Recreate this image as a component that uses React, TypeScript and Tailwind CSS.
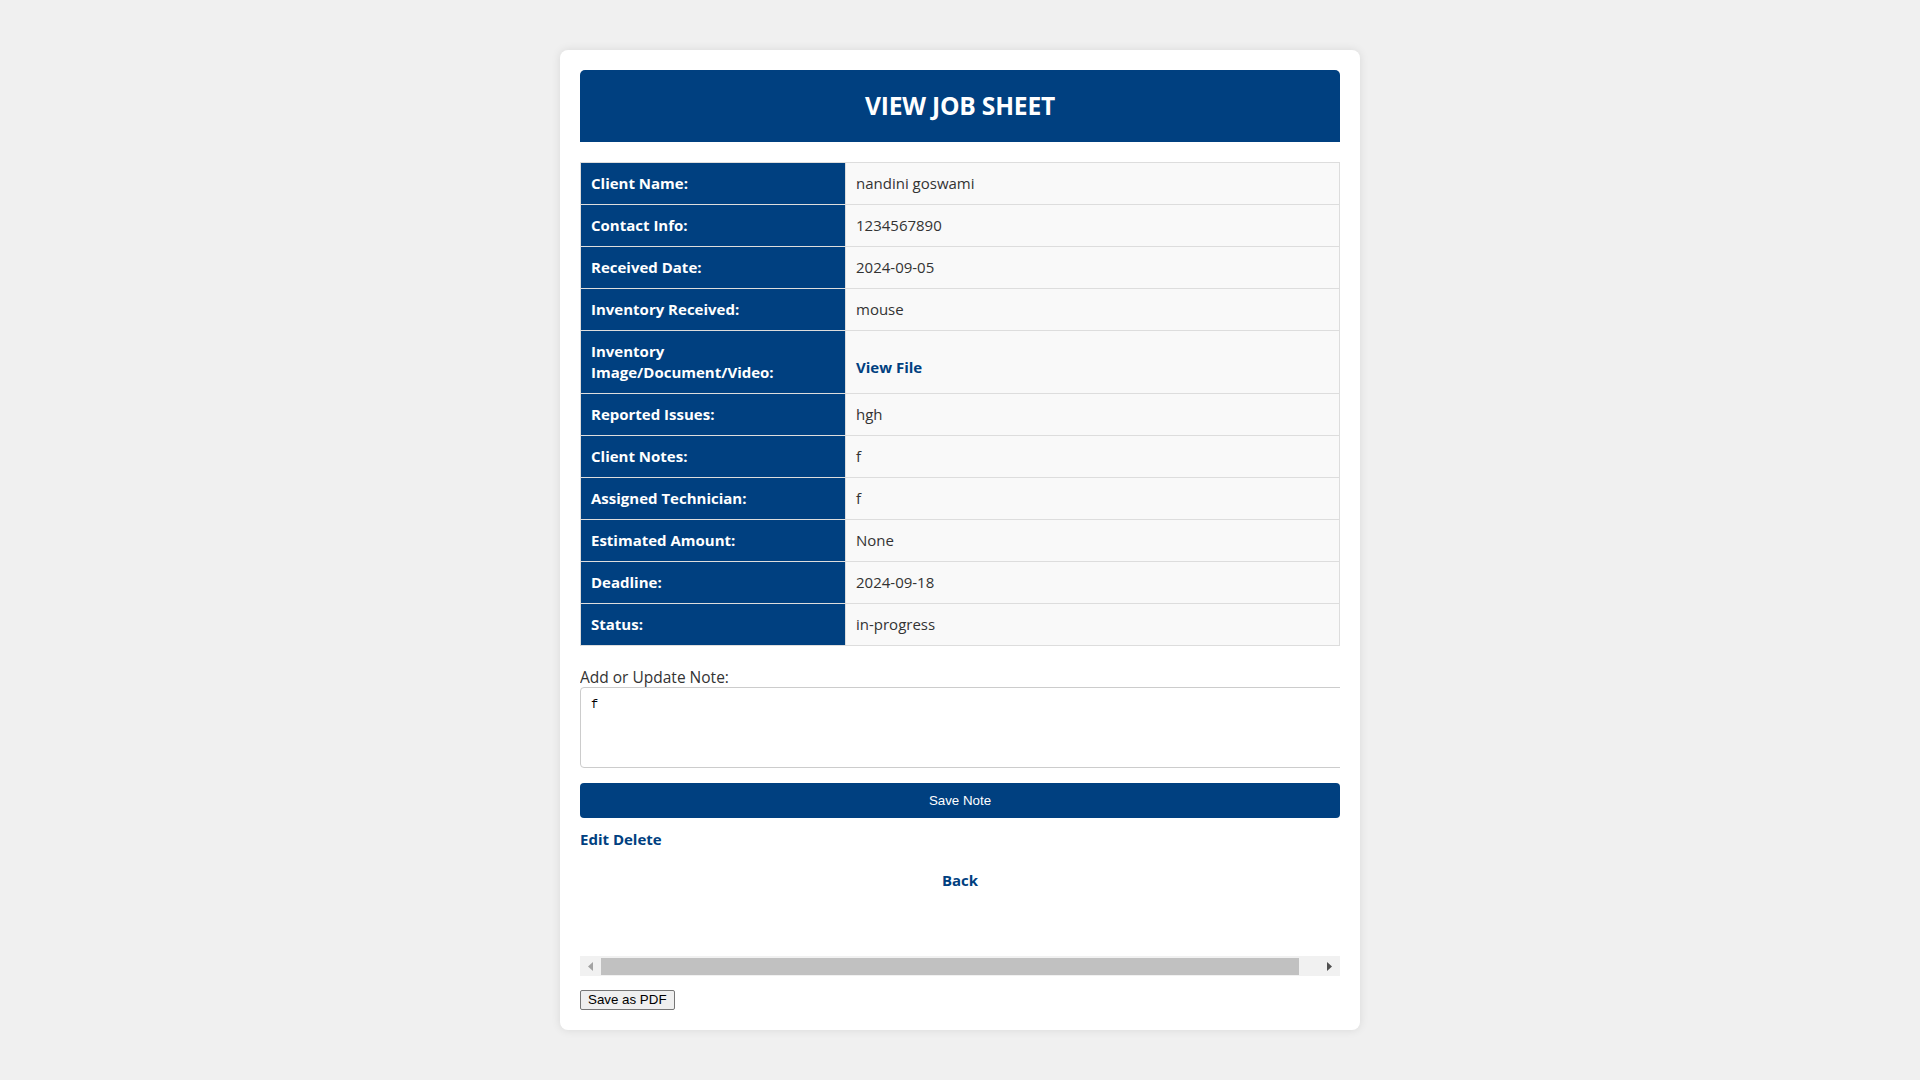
import React from "react";

interface Field {
  label: string;
  value: string;
  link?: boolean;
}

const fields: Field[] = [
  { label: "Client Name:", value: "nandini goswami" },
  { label: "Contact Info:", value: "1234567890" },
  { label: "Received Date:", value: "2024-09-05" },
  { label: "Inventory Received:", value: "mouse" },
  { label: "Inventory Image/Document/Video:", value: "View File", link: true },
  { label: "Reported Issues:", value: "hgh" },
  { label: "Client Notes:", value: "f" },
  { label: "Assigned Technician:", value: "f" },
  { label: "Estimated Amount:", value: "None" },
  { label: "Deadline:", value: "2024-09-18" },
  { label: "Status:", value: "in-progress" },
];

const App: React.FC = () => {
  return (
    <div className="min-h-screen bg-[#f0f0f0] pt-[50px] pb-[51px] font-['Open_Sans',sans-serif] text-[#333]">
      <div className="w-[800px] mx-auto bg-white rounded-[8px] shadow-[0_0_10px_rgba(0,0,0,0.1)] px-5 pt-5 pb-5">
        {/* scroll area */}
        <div className="overflow-hidden">
          <div className="h-[72px] bg-[#004080] rounded-t-[5px] flex items-center justify-center">
            <h1 className="text-white font-bold text-[24.6px] leading-none tracking-[-0.2px]">VIEW JOB SHEET</h1>
          </div>

          {/* details table */}
          <div className="mt-5 border border-[#ddd] divide-y divide-[#ddd]">
            {fields.map((f) => (
              <div key={f.label} className="flex text-[15px] leading-[21px]">
                <div className="w-[265px] shrink-0 bg-[#004080] text-white font-bold px-[10px] py-[10px] border-r border-[#ddd]">
                  {f.label === "Inventory Image/Document/Video:" ? (
                    <>
                      Inventory
                      <br />
                      Image/Document/Video:
                    </>
                  ) : (
                    f.label
                  )}
                </div>
                {f.link ? (
                  <div className="flex-1 bg-[#f9f9f9] px-[10px] pt-[20px] pb-[10px] flex items-center">
                    <span className="font-bold text-[#004080]">{f.value}</span>
                  </div>
                ) : (
                  <div className="flex-1 bg-[#f9f9f9] px-[10px] py-[10px] flex items-center">{f.value}</div>
                )}
              </div>
            ))}
          </div>

          {/* note form */}
          <div className="mt-[20px] text-[15.5px] leading-[21px] text-[#333] pt-[1px] -mb-[1px]">Add or Update Note:</div>
          <div className="w-[790px] h-[81px] border border-[#ccc] rounded-[4px] px-[10px] py-[10px] font-['Liberation_Mono',monospace] text-[12px] leading-[15px] text-black">
            f
          </div>
          <button className="mt-[15px] w-full h-[35px] bg-[#004080] text-white rounded-[4px] font-['Liberation_Sans',Arial,sans-serif] text-[13.33px]">
            Save Note
          </button>

          <div className="mt-[11px] text-[15px] leading-[21px] font-bold text-[#004080]">Edit Delete</div>
          <div className="mt-[20px] text-[15px] leading-[21px] font-bold text-[#004080] text-center">Back</div>
          <div className="h-[65px]" />
        </div>

        {/* horizontal scrollbar */}
        <div className="h-[20px] bg-[#f1f1f1] flex items-center">
          <div className="w-[21px] h-full flex items-center justify-center">
            <svg width="5" height="9" viewBox="0 0 5 9">
              <path d="M5 0 L0 4.5 L5 9 Z" fill="#a3a3a3" />
            </svg>
          </div>
          <div className="w-[698px] h-[17px] bg-[#c1c1c1]" />
          <div className="flex-1 h-full flex items-center justify-end pr-[8px]">
            <svg width="5" height="9" viewBox="0 0 5 9">
              <path d="M0 0 L5 4.5 L0 9 Z" fill="#505050" />
            </svg>
          </div>
        </div>

        <button className="mt-[14px] h-[20px] px-[7px] bg-[#efefef] border border-[#767676] rounded-[2px] font-['Liberation_Sans',Arial,sans-serif] text-[13.33px] leading-[16px] text-black">
          Save as PDF
        </button>
      </div>
    </div>
  );
};

export default App;
